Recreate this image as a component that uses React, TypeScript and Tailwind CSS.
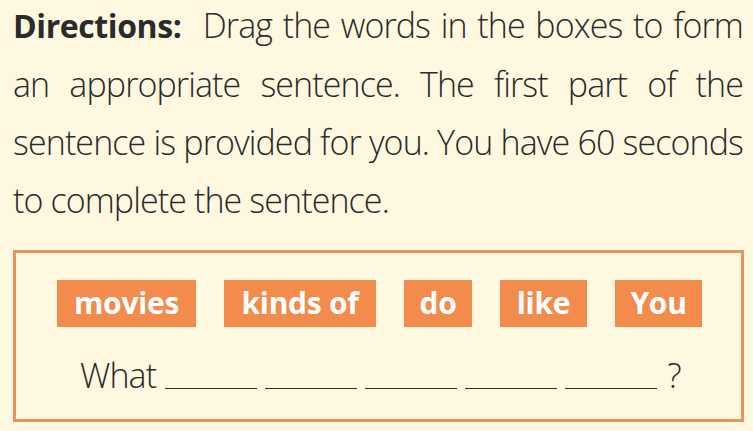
import React from "react";

const words = [
  { t: "movies", w: "w-[139px]" },
  { t: "kinds of", w: "w-[152px]" },
  { t: "do", w: "w-[68px]" },
  { t: "like", w: "w-[87px]" },
  { t: "You", w: "w-[87px]" },
];

export default function App() {
  return (
    <div className="w-[753px] h-[431px] overflow-hidden bg-[#fef8e0] text-[#2b2b2b] [font-family:'Open_Sans',sans-serif]">
      <p className="ml-[13px] w-[730px] mt-[-4px] text-[34px] leading-[58px] font-light text-justify tracking-[-0.9px]">
        <span className="font-bold text-[32px] tracking-[-0.4px]">Directions:</span>&nbsp; Drag the words in the boxes to form an appropriate sentence. The first part of the sentence is provided for you. You have 60 seconds to complete the sentence.
      </p>
      <div className="absolute left-[13px] top-[250px] w-[731px] h-[172px] border-[3px] border-[#e9935c] flex flex-col">
        <div className="flex gap-[28px] ml-[41px] mt-[27px]">
          {words.map((w) => (
            <div
              key={w.t}
              className={`${w.w} h-[47px] bg-[#f28b4b] text-white font-bold text-[30px] tracking-[-0.3px] flex items-center justify-center leading-none pb-[2px]`}
            >
              {w.t}
            </div>
          ))}
        </div>
        <div className="flex items-end ml-[64px] mt-[28px] text-[34px] font-light leading-[40px]">
          <span className="tracking-[-0.9px]">What</span>
          <div className="flex ml-[9px] gap-[8px] mb-[6px]">
            {[0, 1, 2, 3, 4].map((i) => (
              <span key={i} className="block w-[92px] h-0 border-b-[1.5px] border-[#2b2b2b]" />
            ))}
          </div>
          <span className="ml-[10px]">?</span>
        </div>
      </div>
    </div>
  );
}
